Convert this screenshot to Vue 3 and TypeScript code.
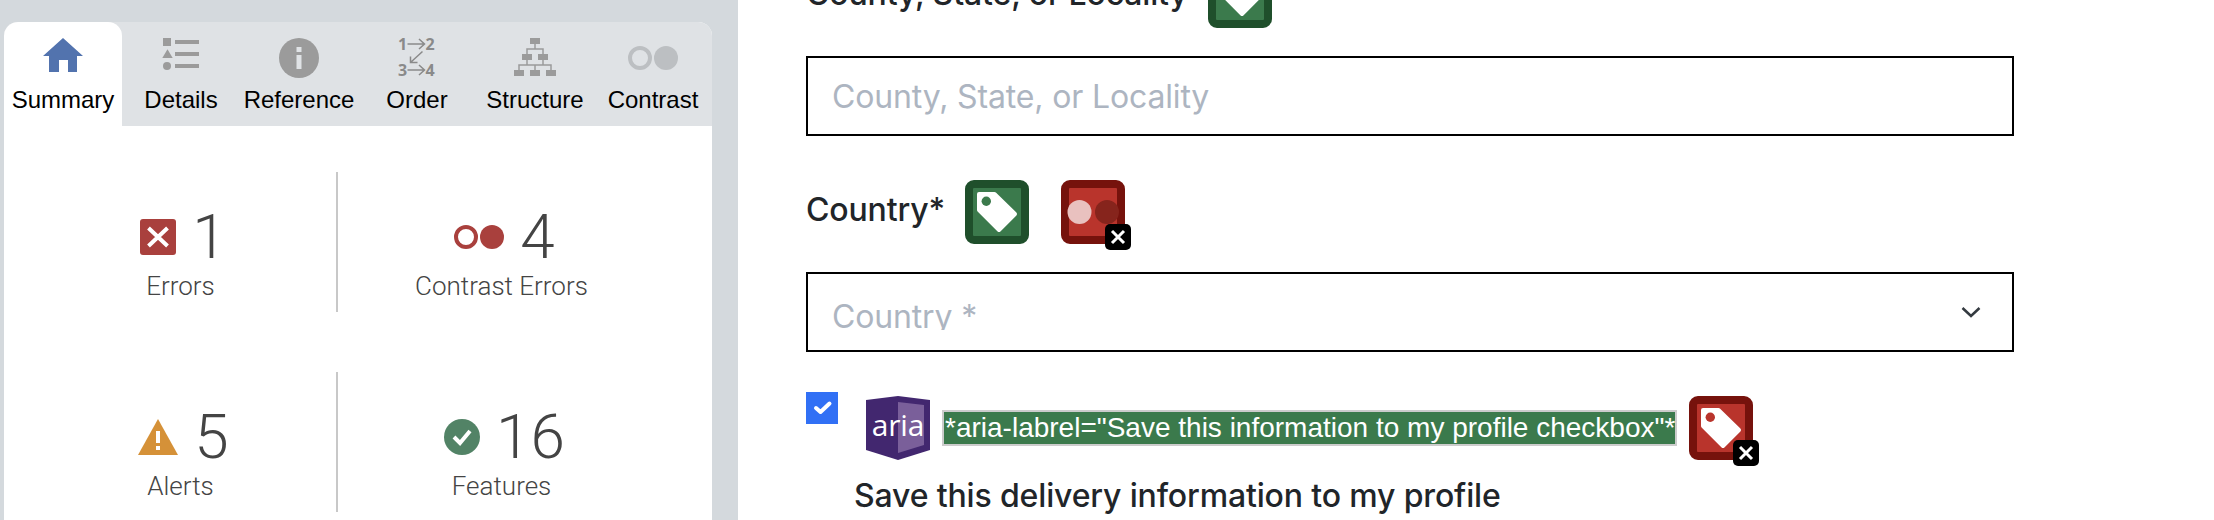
<script setup lang="ts">
const tabs = ['Summary', 'Details', 'Reference', 'Order', 'Structure', 'Contrast']
</script>

<template>
  <div class="page">
    <aside class="side">
      <div class="panel">
        <ul class="tabs">
          <li v-for="(tab, i) in tabs" :key="tab" class="tab" :class="{ active: i === 0 }">
            <svg v-if="i === 0" class="tab-icon" viewBox="0 0 40 40">
              <path d="M20 0 L40 18 H34 V34 H25 V22 H16 V34 H6 V18 H0 Z" fill="#5273ae" />
            </svg>
            <svg v-else-if="i === 1" class="tab-icon" viewBox="0 0 40 40">
              <rect x="2" y="0" width="8" height="8" fill="#9b9b9b" />
              <rect x="14" y="2" width="24" height="4" fill="#9b9b9b" />
              <path d="M6.500 11.300 L11.700 20 H1.300 Z" fill="#9b9b9b" />
              <rect x="14" y="14" width="24" height="4" fill="#9b9b9b" />
              <circle cx="6" cy="28" r="4" fill="#9b9b9b" />
              <rect x="14" y="26" width="24" height="4" fill="#9b9b9b" />
            </svg>
            <svg v-else-if="i === 2" class="tab-icon" viewBox="0 0 40 40">
              <circle cx="20" cy="20" r="20" fill="#9b9b9b" />
              <rect x="17.500" y="9" width="5" height="5" fill="#e0e3e6" />
              <rect x="17.500" y="17" width="5" height="14" fill="#e0e3e6" />
            </svg>
            <svg v-else-if="i === 3" class="tab-icon" viewBox="0 0 40 40">
              <text x="1" y="12" class="order-num">1</text>
              <text x="28.500" y="12" class="order-num">2</text>
              <text x="1" y="38" class="order-num">3</text>
              <text x="28.500" y="38" class="order-num">4</text>
              <path d="M10.500 6 H27 M22 1 L27.500 6 L22 11 M10.500 32 H27 M22 27 L27.500 32 L22 37 M25.500 13.500 L13.500 24.500 M13.500 18.500 V24.500 H20.500" fill="none" stroke="#8a8a8a" stroke-width="1.500" />
            </svg>
            <svg v-else-if="i === 4" class="tab-icon" viewBox="0 0 40 40">
              <g fill="#9b9b9b">
                <rect x="15" y="0" width="10" height="6" />
                <rect x="7" y="16" width="10" height="6" />
                <rect x="23" y="16" width="10" height="6" />
                <rect x="-1" y="32" width="10" height="6" />
                <rect x="15" y="32" width="10" height="6" />
                <rect x="31" y="32" width="10" height="6" />
              </g>
              <path d="M20 6 V11 M12 16 V11 H28 V16 M12 22 V27 M28 22 V27 M4 32 V27 H36 V32 M20 27 V32" fill="none" stroke="#9b9b9b" stroke-width="1.500" />
            </svg>
            <svg v-else class="tab-icon contrast" viewBox="0 0 50 40">
              <circle cx="12" cy="20" r="10" fill="none" stroke="#bcbfc2" stroke-width="4" />
              <circle cx="38" cy="20" r="12" fill="#bcbfc2" />
            </svg>
            <span>{{ tab }}</span>
          </li>
        </ul>

        <div class="stats">
          <div class="stat">
            <div class="stat-top">
              <svg class="stat-icon" viewBox="0 0 36 36">
                <rect width="36" height="36" rx="3" fill="#a9403d" />
                <path d="M8.500 9 L27.500 27 M27.500 9 L8.500 27" stroke="#fff" stroke-width="4" />
              </svg>
              <span class="num">1</span>
            </div>
            <div class="stat-label">Errors</div>
          </div>
          <div class="stat">
            <div class="stat-top">
              <svg class="stat-icon wide" viewBox="0 0 50 36">
                <circle cx="12" cy="18" r="10" fill="none" stroke="#a9403d" stroke-width="4" />
                <circle cx="38" cy="18" r="12" fill="#a9403d" />
              </svg>
              <span class="num">4</span>
            </div>
            <div class="stat-label">Contrast Errors</div>
          </div>
          <div class="stat">
            <div class="stat-top">
              <svg class="stat-icon tri" viewBox="0 0 40 36">
                <path d="M20 0 L40 36 H0 Z" fill="#d59138" />
                <rect x="18" y="12" width="4" height="12" fill="#fff" />
                <rect x="18" y="27" width="4" height="4" fill="#fff" />
              </svg>
              <span class="num">5</span>
            </div>
            <div class="stat-label">Alerts</div>
          </div>
          <div class="stat">
            <div class="stat-top">
              <svg class="stat-icon" viewBox="0 0 36 36">
                <circle cx="18" cy="18" r="18" fill="#528366" />
                <path d="M10 18 L16 24 L26 12" fill="none" stroke="#fff" stroke-width="4" />
              </svg>
              <span class="num">16</span>
            </div>
            <div class="stat-label">Features</div>
          </div>
        </div>
      </div>
    </aside>

    <main class="form">
      <div class="label-row first">
        <label>County, State, or Locality</label>
        <span class="badge green">
          <svg class="tag" viewBox="0 0 48 48"><path d="M6 6 H21.500 L42 26 L26 42 L6 22 Z" fill="#fff" stroke="#fff" stroke-width="4" stroke-linejoin="round" /><circle cx="13.300" cy="13.300" r="4.700" fill="#3b7a4c" /></svg>
        </span>
      </div>
      <div class="field">County, State, or Locality</div>

      <div class="label-row">
        <label>Country*</label>
        <span class="badge green">
          <svg class="tag" viewBox="0 0 48 48"><path d="M6 6 H21.500 L42 26 L26 42 L6 22 Z" fill="#fff" stroke="#fff" stroke-width="4" stroke-linejoin="round" /><circle cx="13.300" cy="13.300" r="4.700" fill="#3b7a4c" /></svg>
        </span>
        <span class="badge red next">
          <svg class="tag" viewBox="0 0 48 48"><circle cx="10.500" cy="24" r="12" fill="#e9c1bf" /><circle cx="38" cy="24" r="12" fill="#86241c" /></svg>
          <span class="x">
            <svg viewBox="0 0 26 26"><path d="M7 7 L19 19 M19 7 L7 19" stroke="#fff" stroke-width="3" /></svg>
          </span>
        </span>
      </div>
      <div class="field select">
        <span class="clip">Country *</span>
        <svg class="chevron" viewBox="0 0 20 12"><path d="M1.500 2 L10 10 L18.500 2" fill="none" stroke="#343a40" stroke-width="2.500" /></svg>
      </div>

      <div class="check-row">
        <span class="checkbox">
          <svg viewBox="0 0 32 32"><path d="M10 16 L14.500 20 L23.500 11.500" fill="none" stroke="#fff" stroke-width="4" stroke-linecap="round" stroke-linejoin="round" /></svg>
        </span>
        <svg class="aria" viewBox="0 0 64 64">
          <path d="M0 4 L32 0 L64 4 V54 L32 64 L0 54 Z" fill="#42276f" />
          <path d="M32 6 L58 9 V49 L32 57 Z" fill="#7a5f9a" />
          <text x="32" y="39.500" text-anchor="middle" class="aria-text">aria</text>
        </svg>
        <span class="note">*aria-labrel="Save this information to my profile checkbox"*</span>
        <span class="badge red">
          <svg class="tag" viewBox="0 0 48 48"><path d="M6 6 H21.500 L42 26 L26 42 L6 22 Z" fill="#fff" stroke="#fff" stroke-width="4" stroke-linejoin="round" /><circle cx="13.300" cy="13.300" r="4.700" fill="#b9342c" /></svg>
          <span class="x">
            <svg viewBox="0 0 26 26"><path d="M7 7 L19 19 M19 7 L7 19" stroke="#fff" stroke-width="3" /></svg>
          </span>
        </span>
      </div>
      <div class="save-label">Save this delivery information to my profile</div>
    </main>
  </div>
</template>

<style>
html,
body {
  margin: 0;
  background: #fff;
  overflow: hidden;
}
</style>

<style scoped>
.page {
  display: flex;
  width: 2214px;
  height: 520px;
  overflow: hidden;
  background: #fff;
}

.side {
  flex: 0 0 738px;
  box-sizing: border-box;
  padding: 22px 26px 0 4px;
  background: #d4d9dd;
}

.panel {
  height: 540px;
  border-radius: 14px 14px 0 0;
  background: #fff;
  overflow: hidden;
}

.tabs {
  display: flex;
  height: 104px;
  margin: 0;
  padding: 0;
  list-style: none;
  background: #dfe2e5;
}

.tab {
  display: flex;
  flex: 0 0 118px;
  flex-direction: column;
  align-items: center;
  font: 24px/30px "Liberation Sans", Arial, sans-serif;
  color: #000;
}

.tab.active {
  background: #fff;
  border-radius: 14px 14px 0 0;
}

.tab-icon {
  width: 40px;
  height: 40px;
  margin: 16px 0 7px;
  overflow: visible;
}

.tab-icon.contrast {
  width: 50px;
}

.order-num {
  font: 700 16px "Open Sans", sans-serif;
  fill: #8a8a8a;
}

.stats {
  display: grid;
  grid-template-columns: 313px 327px;
  grid-auto-rows: 140px;
  row-gap: 60px;
  padding: 46px 0 0 21px;
}

.stat {
  display: flex;
  flex-direction: column;
  align-items: center;
}

.stat:nth-child(odd) {
  border-right: 2px solid #c8c8c8;
}

.stat-top {
  display: flex;
  align-items: center;
  gap: 16px;
  height: 60px;
  margin: 35px 0 0 6px;
}

.stat-icon {
  width: 36px;
  height: 36px;
}

.stat-icon.wide {
  width: 50px;
}

.stat-icon.tri {
  width: 40px;
}

.num {
  font: 300 62px/60px Roboto, "Liberation Sans", sans-serif;
  color: #444;
}

.stat-label {
  margin-top: 3px;
  font: 300 26px/32px Roboto, "Liberation Sans", sans-serif;
  color: #444;
}

.form {
  flex: 1;
  padding: 0 0 0 68px;
  font-family: Inter, "Noto Sans", sans-serif;
  letter-spacing: -0.15px;
  color: #212529;
}

.label-row {
  display: flex;
  align-items: center;
  gap: 20px;
  height: 64px;
  margin-bottom: 28px;
  padding-top: 44px;
  font-size: 32px;
  font-weight: 500;
}

.label-row.first {
  margin-top: -36px;
  padding-top: 0;
}

.label-row label {
  position: relative;
  top: -3px;
}

.badge {
  position: relative;
  display: flex;
  flex: none;
  align-items: center;
  justify-content: center;
  box-sizing: border-box;
  width: 64px;
  height: 64px;
  border: 8px solid;
  border-radius: 9px;
}

.badge.next {
  margin-left: 12px;
}

.badge.green {
  border-color: #1f4f2b;
  background: #3b7a4c;
}

.badge.red {
  border-color: #76120c;
  background: #b9342c;
}

.tag {
  width: 48px;
  height: 48px;
  overflow: visible;
}

.x {
  position: absolute;
  right: -14px;
  bottom: -14px;
  width: 26px;
  height: 26px;
  border-radius: 5px;
  background: #000;
}

.x svg {
  display: block;
}

.field {
  display: flex;
  align-items: center;
  box-sizing: border-box;
  width: 1208px;
  height: 80px;
  padding: 0 24px;
  border: 2px solid #000;
  font-size: 32px;
  color: #adb5c1;
}

.select {
  position: relative;
  justify-content: space-between;
  padding-right: 31px;
}

.clip {
  display: block;
  height: 33px;
  margin-top: 3px;
  overflow: hidden;
  line-height: 40px;
}

.chevron {
  width: 20px;
  height: 12px;
}

.check-row {
  display: flex;
  align-items: center;
  height: 64px;
  margin-top: 44px;
}

.checkbox {
  align-self: flex-start;
  flex: none;
  width: 32px;
  height: 32px;
  margin: -4px 28px 0 0;
  background: #3170f5;
}

.checkbox svg {
  display: block;
}

.aria {
  flex: none;
  width: 64px;
  height: 64px;
  margin-right: 12px;
}

.aria-text {
  font: 400 30px "Open Sans", sans-serif;
  fill: #fff;
}

.note {
  box-sizing: border-box;
  width: 735px;
  height: 36px;
  margin-right: 12px;
  padding-left: 1px;
  border: 2px solid #ccc;
  background: #3b7a4c;
  font: 28px/32px "Liberation Sans", Arial, sans-serif;
  letter-spacing: 0;
  color: #fff;
  white-space: nowrap;
}

.save-label {
  margin: 14px 0 0 48px;
  font-size: 32px;
  line-height: 44px;
  font-weight: 500;
}
</style>
